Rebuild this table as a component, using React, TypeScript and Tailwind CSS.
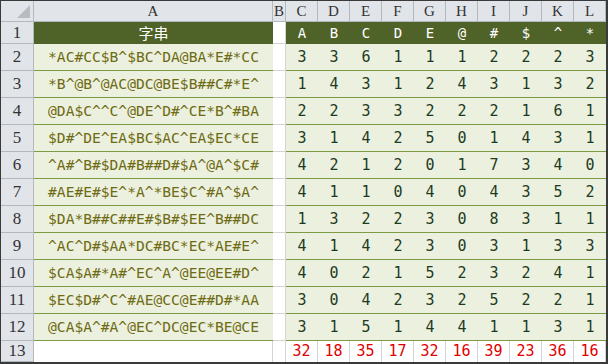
const cols = ["C", "D", "E", "F", "G", "H", "I", "J", "K", "L"]
const heads = ["A", "B", "C", "D", "E", "@", "#", "$", "^", "*"]

const rows: [string, number[]][] = [
  ["*AC#CC$B^$BC^DA@BA*E#*CC", [3, 3, 6, 1, 1, 1, 2, 2, 2, 3]],
  ["*B^@B^@AC@DC@BE$B##C#*E^", [1, 4, 3, 1, 2, 4, 3, 1, 3, 2]],
  ["@DA$C^^C^@DE^D#^CE*B^#BA", [2, 2, 3, 3, 2, 2, 2, 1, 6, 1]],
  ["$D#^DE^EA$BC$AC^EA$EC*CE", [3, 1, 4, 2, 5, 0, 1, 4, 3, 1]],
  ["^A#^B#$DA#B##D#$A^@A^$C#", [4, 2, 1, 2, 0, 1, 7, 3, 4, 0]],
  ["#AE#E#$E^*A^*BE$C^#A^$A^", [4, 1, 1, 0, 4, 0, 4, 3, 5, 2]],
  ["$DA*B##C##E#$B#$EE^B##DC", [1, 3, 2, 2, 3, 0, 8, 3, 1, 1]],
  ["^AC^D#$AA*DC#BC*EC*AE#E^", [4, 1, 4, 2, 3, 0, 3, 1, 3, 3]],
  ["$CA$A#*A#^EC^A^@EE@EE#D^", [4, 0, 2, 1, 5, 2, 3, 2, 4, 1]],
  ["$EC$D#^C^#AE@CC@E##D#*AA", [3, 0, 4, 2, 3, 2, 5, 2, 2, 1]],
  ["@CA$A^#A^@EC^DC@EC*BE@CE", [3, 1, 5, 1, 4, 4, 1, 1, 3, 1]],
]

const totals = [32, 18, 35, 17, 32, 16, 39, 23, 36, 16]

const hdr = "bg-[#e1e5ea] border-r border-b border-[#b3b8bf] flex items-center justify-center text-[#333] font-['Liberation_Serif',serif]"
const mono = "font-['DejaVu_Sans_Mono',monospace]"

export default function App() {
  return (
    <div className="w-[608px] h-[364px] bg-white border-t border-l border-r-2 border-b-2 border-[#3a3a3a] overflow-hidden">
      <div className="grid grid-cols-[33px_239px_13px_repeat(10,32px)] grid-rows-[21px_22px_repeat(11,27px)_21px]">
        {/* column headers */}
        <div className={`${hdr} relative`}>
          <div className="absolute right-[3px] bottom-[3px] w-0 h-0 border-l-[13px] border-l-transparent border-b-[13px] border-b-[#b7bcc3]"></div>
        </div>
        <div className={`${hdr} text-[15px]`}>A</div>
        <div className={`${hdr} text-[15px]`}>B</div>
        {cols.map(c => (
          <div key={c} className={`${hdr} text-[15px]`}>{c}</div>
        ))}

        {/* row 1 */}
        <div className={`${hdr} text-[17px]`}>1</div>
        <div className="bg-[#4f6228] flex items-center justify-center text-white text-[15px] font-['Noto_Sans_CJK_TC',sans-serif]">字串</div>
        <div className="bg-white border-r border-b border-[#d4d4d4]"></div>
        {heads.map(h => (
          <div key={h} className={`bg-[#4f6228] flex items-center justify-center text-white text-[14px] ${mono}`}>{h}</div>
        ))}

        {/* data rows */}
        {rows.map(([s, nums], i) => (
          <>
            <div key={"h" + i} className={`${hdr} text-[17px]`}>{i + 2}</div>
            <div key={"s" + i} className={`bg-[#ebf1de] border-b border-[#7f9a45] flex items-center justify-center text-[14.6px] text-[#6f6a14] ${mono}`}>{s}</div>
            <div key={"b" + i} className="bg-white border-r border-b border-[#d4d4d4]"></div>
            {nums.map((n, j) => (
              <div key={"n" + i + "-" + j} className={`bg-[#ebf1de] border-b border-[#7f9a45] flex items-center justify-center text-[15px] text-[#1d3b24] ${mono}`}>{n}</div>
            ))}
          </>
        ))}

        {/* totals */}
        <div className={`${hdr} text-[17px]`}>13</div>
        <div className="bg-white border-r border-[#d4d4d4]"></div>
        <div className="bg-white border-r border-[#d4d4d4]"></div>
        {totals.map((t, j) => (
          <div key={"t" + j} className={`bg-white border-r border-[#d4d4d4] flex items-center justify-center text-[15px] text-[#e00000] ${mono}`}>{t}</div>
        ))}
      </div>
    </div>
  )
}
